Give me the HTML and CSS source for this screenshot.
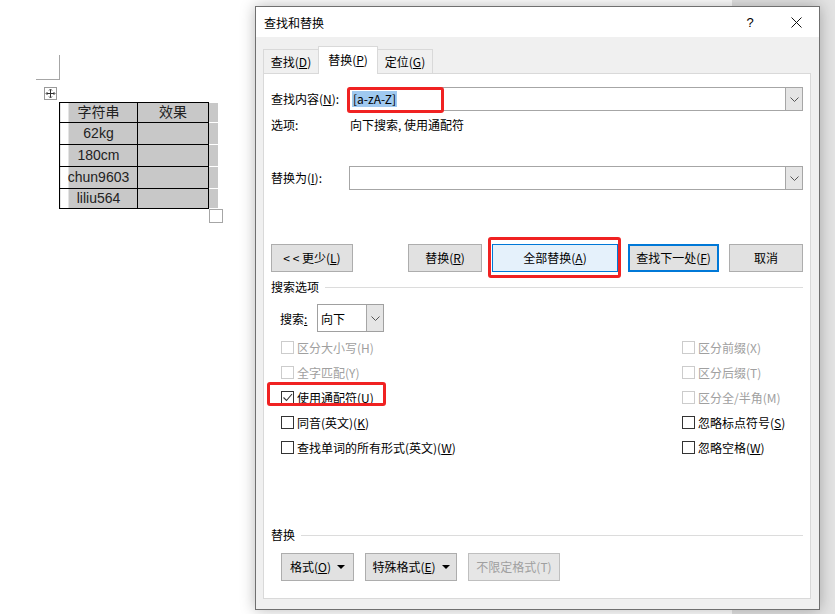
FILE: index.html
```html
<!DOCTYPE html>
<html>
    <head>
        <meta charset="utf-8">
        <title>查找和替换</title>
        <link rel="stylesheet" href="styles.css">
    </head>
    <body>
        <div class="desk">
            <div class="page">
                <div class="corner"></div>
                <div class="move-handle">
                    <svg width="13" height="13" viewBox="0 0 13 13">
                        <rect x="0.5" y="0.5" width="12" height="12" fill="#fff" stroke="#9a9a9a"/>
                        <path d="M6.5 2.5v8M2.5 6.5h8" stroke="#333" stroke-width="1"/>
                        <path d="M5 3.5l1.5-1.5 1.5 1.5M5 9.5l1.5 1.5 1.5-1.5M3.5 5l-1.5 1.5 1.5 1.5M9.5 5l1.5 1.5-1.5 1.5" fill="none" stroke="#333" stroke-width="0.9"/>
                    </svg>
                </div>
                <table class="doc-table">
                    <tr class="r-first"><td class="c1">字符串</td><td class="c2">效果</td><td class="end"></td></tr>
                    <tr><td class="c1">62kg</td><td class="c2"></td><td class="end"></td></tr>
                    <tr><td class="c1">180cm</td><td class="c2"></td><td class="end"></td></tr>
                    <tr><td class="c1">chun9603</td><td class="c2"></td><td class="end"></td></tr>
                    <tr class="r-last"><td class="c1">liliu564</td><td class="c2"></td><td class="end"></td></tr>
                </table>
                <div class="resize-handle"></div>
            </div>

            <div class="dialog">
                <div class="titlebar">
                    <span class="title">查找和替换</span>
                    <span class="tb-btn help">?</span>
                    <span class="tb-btn">
                        <svg width="11" height="11" viewBox="0 0 11 11">
                            <path d="M0.5 0.5l10 10M10.5 0.5l-10 10" stroke="#111" stroke-width="1"/>
                        </svg>
                    </span>
                </div>
                <div class="dlg-body">
                    <div class="tabs">
                        <div class="tab">查找(<u>D</u>)</div>
                        <div class="tab active">替换(<u>P</u>)</div>
                        <div class="tab">定位(<u>G</u>)</div>
                    </div>
                    <div class="panel">
                        <div class="field-row find-row">
                            <span class="field-label">查找内容(<u>N</u>):</span>
                            <div class="combo">
                                <span class="combo-text"><span class="sel">[a-zA-Z]</span></span>
                                <span class="combo-btn">
                                    <svg width="9" height="5" viewBox="0 0 9 5"><path d="M0.5 0.5l4 4 4-4" fill="none" stroke="#555"/></svg>
                                </span>
                            </div>
                        </div>
                        <div class="info-row">
                            <span class="field-label">选项:</span>
                            <span>向下搜索, 使用通配符</span>
                        </div>
                        <div class="field-row replace-row">
                            <span class="field-label">替换为(<u>I</u>):</span>
                            <div class="combo">
                                <span class="combo-text"></span>
                                <span class="combo-btn">
                                    <svg width="9" height="5" viewBox="0 0 9 5"><path d="M0.5 0.5l4 4 4-4" fill="none" stroke="#555"/></svg>
                                </span>
                            </div>
                        </div>
                        <div class="btn-row">
                            <div class="btn w-less">&lt; &lt; 更少(<u>L</u>)</div>
                            <div class="btn-group">
                                <div class="btn w-rep">替换(<u>R</u>)</div>
                                <div class="btn w-all hot">全部替换(<u>A</u>)</div>
                                <div class="btn w-next default">查找下一处(<u>F</u>)</div>
                                <div class="btn w-cancel">取消</div>
                            </div>
                        </div>
                        <div class="group-title">搜索选项</div>
                        <div class="search-dir">
                            <span class="dir-label">搜索<u>:</u></span>
                            <div class="select">
                                <span class="select-text">向下</span>
                                <span class="select-btn">
                                    <svg width="9" height="5" viewBox="0 0 9 5"><path d="M0.5 0.5l4 4 4-4" fill="none" stroke="#555"/></svg>
                                </span>
                            </div>
                        </div>
                        <div class="options">
                            <div class="opt-col">
                                <div class="opt off"><span class="box"></span>区分大小写(H)</div>
                                <div class="opt off"><span class="box"></span>全字匹配(Y)</div>
                                <div class="opt"><span class="box">
                                    <svg width="11" height="11" viewBox="0 0 11 11"><path d="M1.5 5.5l3 3 5.5-6.5" fill="none" stroke="#333" stroke-width="1.1"/></svg>
                                </span>使用通配符(<u>U</u>)</div>
                                <div class="opt"><span class="box"></span>同音(英文)(<u>K</u>)</div>
                                <div class="opt"><span class="box"></span>查找单词的所有形式(英文)(<u>W</u>)</div>
                            </div>
                            <div class="opt-col">
                                <div class="opt off"><span class="box"></span>区分前缀(X)</div>
                                <div class="opt off"><span class="box"></span>区分后缀(T)</div>
                                <div class="opt off"><span class="box"></span>区分全/半角(M)</div>
                                <div class="opt"><span class="box"></span>忽略标点符号(<u>S</u>)</div>
                                <div class="opt"><span class="box"></span>忽略空格(<u>W</u>)</div>
                            </div>
                        </div>
                        <div class="group-title bottom-title">替换</div>
                        <div class="fmt-row">
                            <div class="btn w-fmt">格式(<u>O</u>)<span class="caret"></span></div>
                            <div class="btn w-special">特殊格式(<u>E</u>)<span class="caret"></span></div>
                            <div class="btn w-plain disabled">不限定格式(T)</div>
                        </div>

                        <div class="mark mark-find"></div>
                        <div class="mark mark-all"></div>
                        <div class="mark mark-wild"></div>
                    </div>
                </div>
            </div>
        </div>
    </body>
</html>
```

FILE: styles.css
```css
*{
margin: 0;
padding: 0;
box-sizing: border-box;
}
body{
width: 835px;
height: 614px;
overflow: hidden;
background: #e3e3e3;
font-family: "Noto Sans CJK SC", "Liberation Sans", sans-serif;
font-size: 12px;
color: #000;
}
u{
text-underline-offset: 1px;
}
.desk{
position: relative;
height: 614px;
}

/* word page behind the dialog */
.page{
width: 732px;
height: 614px;
background: #fff;
padding: 55px 0 0 36px;
}
.corner{
width: 24px;
height: 25px;
border-right: 1px solid #a6a6a6;
border-bottom: 1px solid #a6a6a6;
}
.move-handle{
width: 13px;
height: 13px;
margin: 7px 0 0 8px;
}
.move-handle svg{
display: block;
}
.doc-table{
border-collapse: collapse;
margin: 2px 0 0 23px;
font-family: "Liberation Sans", "Noto Sans CJK SC", sans-serif;
font-size: 14px;
color: #222;
}
.doc-table tr{
height: 22px;
}
.doc-table tr.r-first, .doc-table tr.r-last{
height: 20px;
}
.doc-table td{
border: 1px solid #000;
text-align: center;
padding: 0;
line-height: 17px;
}
.doc-table .c1{
width: 78px;
background: linear-gradient(to right, #fff 8px, #c8c8c8 8px);
}
.doc-table .c2{
width: 71px;
background: #c8c8c8;
}
.doc-table td.end{
width: 9px;
border-top: 1px solid #fff;
border-bottom: 1px solid #fff;
border-right: none;
background: #c8c8c8;
}
.resize-handle{
width: 14px;
height: 14px;
margin-left: 173px;
border: 1px solid #a6a6a6;
background: #fff;
}

/* dialog window */
.dialog{
position: absolute;
left: 255px;
top: 6px;
width: 565px;
height: 604px;
border: 1px solid #707070;
background: #f0f0f0;
box-shadow: 0 0 14px rgba(0,0,0,0.28);
display: flex;
flex-direction: column;
}
.titlebar{
height: 30px;
background: #fff;
display: flex;
align-items: center;
}
.title{
flex: 1;
padding-left: 8px;
}
.tb-btn{
width: 46px;
height: 30px;
display: flex;
align-items: center;
justify-content: center;
}
.tb-btn svg{
display: block;
}
.help{
font-family: "Liberation Sans", sans-serif;
font-size: 13px;
}
.dlg-body{
padding: 9px 8px 10px 7px;
}
.tabs{
display: flex;
align-items: flex-end;
height: 28px;
margin-bottom: -1px;
}
.tab{
height: 25px;
width: 56px;
border: 1px solid #d9d9d9;
display: flex;
align-items: center;
justify-content: center;
padding-bottom: 1px;
}
.tab.active{
position: relative;
z-index: 1;
width: 60px;
height: 28px;
margin: 0 -1px;
background: #fff;
border-bottom: none;
padding-bottom: 2px;
}
.panel{
position: relative;
height: 526px;
background: #fff;
border: 1px solid #d9d9d9;
padding: 0 7px;
}

/* find / replace fields */
.field-row{
display: flex;
align-items: center;
height: 24px;
}
.find-row{
margin-top: 13px;
}
.replace-row{
margin-top: 33px;
}
.field-label{
width: 78px;
flex-shrink: 0;
line-height: 16px;
}
.combo{
flex: 1;
height: 24px;
border: 1px solid #a6a6a6;
display: flex;
}
.combo-text{
flex: 1;
display: flex;
align-items: center;
padding-left: 2px;
}
.sel{
background: #9fc9f0;
line-height: 16px;
padding: 0 1px;
}
.combo-btn, .select-btn{
width: 17px;
background: #e5e5e5;
border-left: 1px solid #a6a6a6;
display: flex;
align-items: center;
justify-content: center;
}
.info-row{
display: flex;
margin-top: 6px;
line-height: 16px;
}
.info-row .field-label{
width: 79px;
}

/* buttons */
.btn-row{
display: flex;
margin-top: 54px;
}
.btn-group{
display: flex;
gap: 10px;
margin-left: 55px;
}
.btn{
height: 28px;
border: 1px solid #adadad;
background: #e1e1e1;
display: flex;
align-items: center;
justify-content: center;
line-height: 16px;
}
.btn.hot{
background: #e5f1fb;
border-color: #0078d7;
}
.btn.default{
border: 2px solid #0078d7;
}
.btn.disabled{
color: #a0a0a0;
border-color: #bfbfbf;
background: #e6e6e6;
}
.w-less{ width: 82px; }
.w-rep{ width: 74px; }
.w-all{ width: 126px; }
.w-next{ width: 91px; }
.w-cancel{ width: 74px; }
.w-fmt{ width: 73px; }
.w-special{ width: 92px; }
.w-plain{ width: 92px; }
.caret{
width: 0;
height: 0;
margin-left: 6px;
border-left: 4px solid transparent;
border-right: 4px solid transparent;
border-top: 4px solid #000;
}

/* search options */
.group-title{
display: flex;
align-items: center;
gap: 6px;
margin-top: 7px;
line-height: 16px;
}
.group-title::after{
content: "";
flex: 1;
height: 1px;
background: #dcdcdc;
}
.bottom-title{
margin-top: 67px;
}
.search-dir{
display: flex;
align-items: center;
margin-top: 9px;
padding-left: 9px;
}
.dir-label{
width: 37px;
}
.select{
width: 67px;
height: 28px;
border: 1px solid #a0a0a0;
display: flex;
}
.select-text{
flex: 1;
display: flex;
align-items: center;
padding-left: 3px;
}
.options{
display: grid;
grid-template-columns: 401px 121px;
margin-top: 3px;
padding-left: 10px;
}
.opt{
display: flex;
align-items: center;
height: 25px;
white-space: nowrap;
}
.box{
width: 13px;
height: 13px;
border: 1px solid #333;
background: #fff;
margin-right: 3px;
display: flex;
align-items: center;
justify-content: center;
}
.opt.off{
color: #a0a0a0;
}
.opt.off .box{
border-color: #cccccc;
}
.fmt-row{
display: flex;
gap: 11px;
margin-top: 10px;
padding-left: 10px;
}

/* red annotation frames */
.mark{
position: absolute;
border: 3px solid #f02222;
border-radius: 3px;
}
.mark-find{
left: 83px;
top: 13px;
width: 97px;
height: 26px;
}
.mark-all{
left: 224px;
top: 163px;
width: 133px;
height: 41px;
}
.mark-wild{
left: 3px;
top: 308px;
width: 119px;
height: 24px;
}
```
